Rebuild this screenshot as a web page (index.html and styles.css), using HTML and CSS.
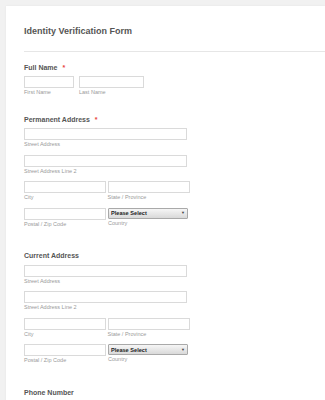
FILE: index.html
```html
<!doctype html>
<html lang="en">

<head>
  <meta charset="UTF-8" />
  <meta name="viewport" content="width=device-width, initial-scale=1.0" />
  <title>Identity Verification Form</title>
  <link rel="stylesheet" href="styles.css">
</head>

<body>
  <div class="page">
    <form class="card">
      <h1 class="form-title">Identity Verification Form</h1>

      <ul class="form-fields">
        <li class="field field-name">
          <label class="field-label">Full Name <span class="required">*</span></label>
          <div class="name-row">
            <div class="sub-field">
              <input type="text" class="input input-first" />
              <span class="sublabel">First Name</span>
            </div>
            <div class="sub-field">
              <input type="text" class="input input-last" />
              <span class="sublabel">Last Name</span>
            </div>
          </div>
        </li>

        <li class="field field-address">
          <label class="field-label">Permanent Address <span class="required">*</span></label>
          <div class="address-rows">
            <div class="sub-field">
              <input type="text" class="input input-wide" />
              <span class="sublabel">Street Address</span>
            </div>
            <div class="sub-field">
              <input type="text" class="input input-wide" />
              <span class="sublabel">Street Address Line 2</span>
            </div>
            <div class="pair-row">
              <div class="sub-field">
                <input type="text" class="input input-half" />
                <span class="sublabel">City</span>
              </div>
              <div class="sub-field">
                <input type="text" class="input input-half" />
                <span class="sublabel">State / Province</span>
              </div>
            </div>
            <div class="pair-row pair-select">
              <div class="sub-field">
                <input type="text" class="input input-half" />
                <span class="sublabel">Postal / Zip Code</span>
              </div>
              <div class="sub-field">
                <div class="select-wrap">
                  <select class="select">
                    <option>Please Select</option>
                  </select>
                  <span class="select-arrow">▼</span>
                </div>
                <span class="sublabel">Country</span>
              </div>
            </div>
          </div>
        </li>

        <li class="field field-address">
          <label class="field-label">Current Address</label>
          <div class="address-rows">
            <div class="sub-field">
              <input type="text" class="input input-wide" />
              <span class="sublabel">Street Address</span>
            </div>
            <div class="sub-field">
              <input type="text" class="input input-wide" />
              <span class="sublabel">Street Address Line 2</span>
            </div>
            <div class="pair-row">
              <div class="sub-field">
                <input type="text" class="input input-half" />
                <span class="sublabel">City</span>
              </div>
              <div class="sub-field">
                <input type="text" class="input input-half" />
                <span class="sublabel">State / Province</span>
              </div>
            </div>
            <div class="pair-row pair-select">
              <div class="sub-field">
                <input type="text" class="input input-half" />
                <span class="sublabel">Postal / Zip Code</span>
              </div>
              <div class="sub-field">
                <div class="select-wrap">
                  <select class="select">
                    <option>Please Select</option>
                  </select>
                  <span class="select-arrow">▼</span>
                </div>
                <span class="sublabel">Country</span>
              </div>
            </div>
          </div>
        </li>

        <li class="field">
          <label class="field-label">Phone Number</label>
        </li>
      </ul>
    </form>
  </div>
</body>

</html>
```

FILE: styles.css
```css
* {
  margin: 0;
  padding: 0;
  box-sizing: border-box;
}

html,
body {
  height: 100%;
  width: 100%;
}

body {
  font-family: 'Liberation Sans', Arial, sans-serif;
  background-color: #f1f1f1;
  overflow: hidden;
}

.page {
  padding: 6px 0 0 6px;
}

.card {
  background-color: #ffffff;
  padding: 19px 0 40px 18px;
  box-shadow: 0 0 2px rgba(0, 0, 0, 0.06);
  min-height: 420px;
}

.form-title {
  font-size: 9px;
  line-height: 12px;
  font-weight: 700;
  color: #555555;
  padding-bottom: 14px;
  border-bottom: 1px solid #e6e6e6;
}

.form-fields {
  list-style: none;
  padding-top: 10.5px;
}

.field {
  margin-bottom: 24.7px;
}

.field-name {
  margin-bottom: 19.8px;
}

.field-label {
  display: block;
  font-size: 7px;
  line-height: 9px;
  font-weight: 700;
  color: #555555;
  margin-bottom: 4.5px;
}

.required {
  color: #e8443c;
  margin-left: 3px;
}

.name-row {
  display: flex;
  gap: 5px;
}

.address-rows {
  display: flex;
  flex-direction: column;
  gap: 7.5px;
}

.pair-row {
  display: flex;
  gap: 1.5px;
}

.pair-select {
  gap: 2px;
}

.sub-field {
  display: flex;
  flex-direction: column;
}

.input {
  display: block;
  height: 12px;
  border: 1px solid #dadada;
  background-color: #ffffff;
  outline: none;
}

.input-first {
  width: 50px;
}

.input-last {
  width: 65px;
}

.input-wide {
  width: 163px;
}

.input-half {
  width: 82px;
}

.sublabel {
  display: block;
  font-size: 5.5px;
  line-height: 6px;
  margin-top: 1px;
  color: #9a9a9a;
}

.select-wrap {
  position: relative;
  width: 80px;
  height: 11px;
}

.select {
  appearance: none;
  -webkit-appearance: none;
  display: block;
  width: 100%;
  height: 100%;
  border: 1px solid #a9a9a9;
  border-radius: 1px;
  background: linear-gradient(#f6f6f6, #d9d9d9);
  font-family: 'Liberation Sans', Arial, sans-serif;
  font-size: 5.6px;
  font-weight: 700;
  color: #222222;
  padding-left: 2px;
}

.select-arrow {
  position: absolute;
  right: 3px;
  top: 50%;
  transform: translateY(-50%);
  font-size: 4px;
  line-height: 4px;
  color: #444444;
  pointer-events: none;
}
```
